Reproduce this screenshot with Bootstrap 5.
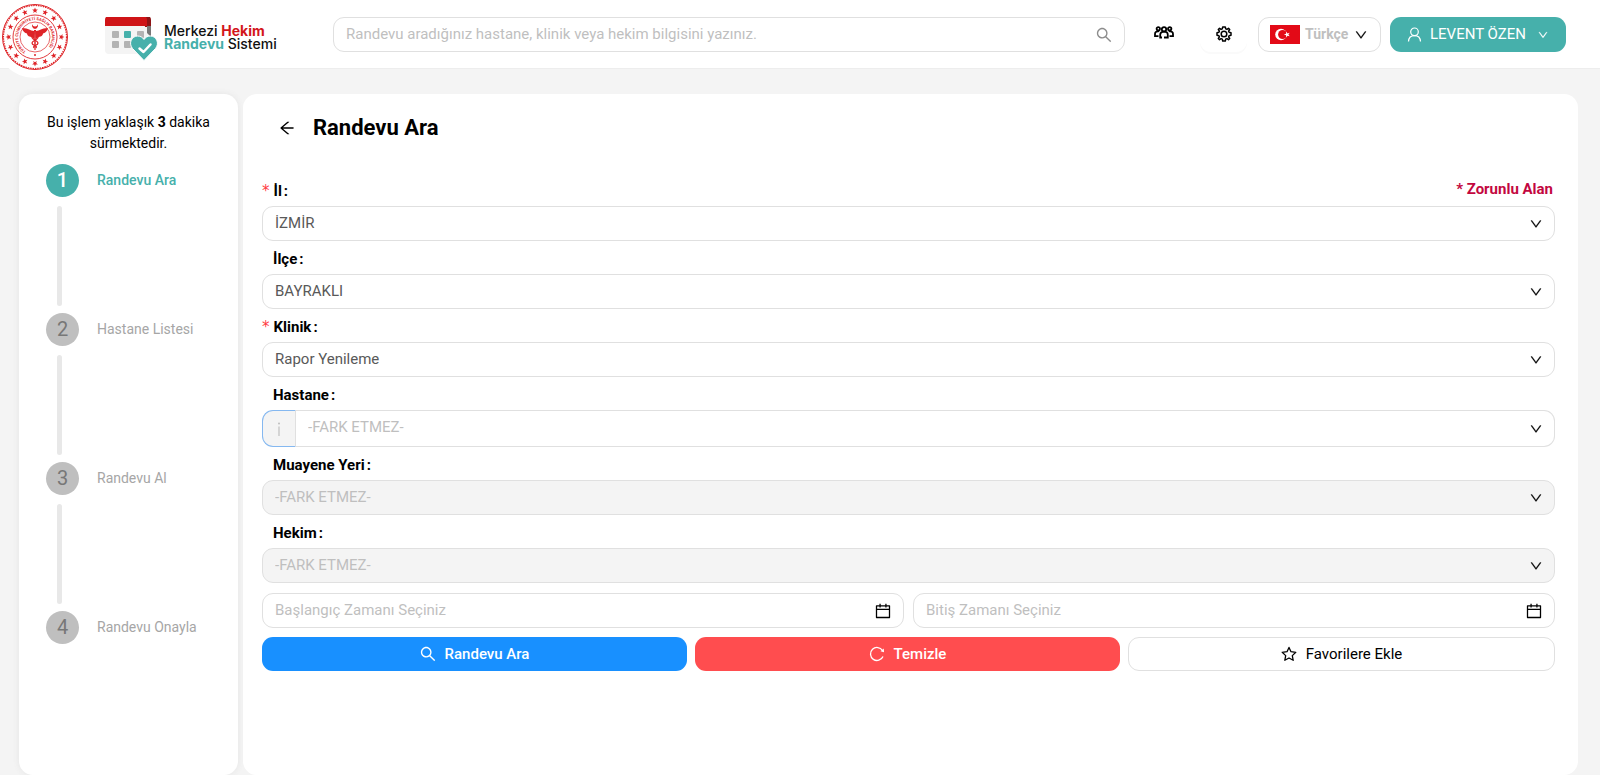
<!DOCTYPE html>
<html lang="tr">
<head>
<meta charset="utf-8">
<meta name="viewport" content="width=device-width, initial-scale=1">
<title>MHRS - Randevu Ara</title>
<link href="https://cdn.jsdelivr.net/npm/bootstrap@5.3.0/dist/css/bootstrap.min.css" rel="stylesheet">
<style>
  :root { --teal: #46b0ab; --line: #e0e0e0; --muted: #bfbfbf; }
  body { font-family: Roboto, "Noto Sans", sans-serif; font-size: 15px; line-height: 21px; color: #000; background: #f4f4f4; }
  svg { display: block; flex: none; }
  .topbar { height: 68px; background: #fff; box-shadow: 0 1px 0 #ededed; padding: 17px 34px 0 105px; }
  .seal { position: absolute; left: -6px; top: -4px; width: 82px; height: 82px; border-radius: 50%; background: #fff; }
  .brand-link { width: 228px; color: #111; text-decoration: none; }
  .brand-name { font-family: Inter, sans-serif; font-size: 14px; line-height: 13px; font-weight: 500; margin: 7px 0 0 5px; white-space: nowrap; }
  .brand-name b { font-weight: 700; }
  .brand-red { color: #d3151b; }
  .brand-teal { color: var(--teal); }
  .field { height: 35px; border: 1px solid var(--line); border-radius: 11px; padding: 0 40px 1px 12px; font-size: 15px; line-height: 21px; color: #595959; background: #fff; }
  .field::placeholder { color: var(--muted); opacity: 1; }
  .field:disabled { background: #f4f4f4; color: var(--muted); opacity: 1; }
  select.field { background-image: none; }
  .field-icon { position: absolute; right: 13px; top: 0; height: 100%; display: flex; align-items: center; pointer-events: none; }
  .field-icon.soft { color: #8c8c8c; }
  .plain { border: 0; background: none; padding: 0; height: 35px; display: flex; align-items: center; justify-content: center; color: #000; }
  .people { width: 29px; margin: 0 22px 0 24px; padding-bottom: 5px; }
  .gear { width: 47px; border-radius: 11px; box-shadow: 0 2px 0 #fafafa; padding-bottom: 2px; margin-right: 11px; }
  .lang { width: 123px; height: 35px; padding: 0 0 0 11px; border: 1px solid var(--line); border-radius: 11px; background: #fff; color: var(--muted); font-weight: 700; font-size: 14px; margin-right: 9px; }
  .lang span { margin: 0 7px 0 5px; }
  .account { width: 176px; height: 35px; padding: 0 0 0 17px; border: 0; border-radius: 11px; background: var(--teal); color: #fff; font-size: 15px; }
  .workspace { padding: 26px 22px 0 19px; gap: 5px; min-height: calc(100vh - 68px); }
  .panel { background: #fff; border-radius: 14px; }
  .steps-panel { width: 219px; padding: 18px 16px; box-shadow: 0 0 6px #e4e4e4; }
  .estimate { font-size: 14px; margin: 0 0 10px; }
  .step { height: 149px; list-style: none; color: #a6a6a6; font-size: 14px; }
  .step:last-child { height: auto; }
  .step-head { height: 33px; gap: 18px; margin-left: 11px; }
  .dot { width: 33px; height: 33px; border-radius: 50%; background: #bfbfbf; color: #777; font-size: 20px; display: flex; align-items: center; justify-content: center; }
  .step.current { color: var(--teal); font-weight: 500; }
  .step.current .dot { background: var(--teal); color: #fff; }
  .rail { width: 5px; height: 100px; border-radius: 3px; background: #e8e8e8; margin: 9px 0 0 22px; }
  .main-panel { padding: 18px 23px 24px 19px; min-width: 0; }
  .page-title { font-size: 22px; line-height: 32px; font-weight: 700; margin: 0; }
  .title-row { gap: 18px; padding-left: 17px; margin-bottom: 29px; }
  .form-label-row { height: 33px; padding: 3px 0 0 11px; font-weight: 700; display: flex; align-items: center; }
  .form-label-row label span { margin-left: 2px; }
  .form-label-row.needed { padding-left: 0; }
  .form-label-row.needed label::before { content: "*"; color: #ff3b3f; font-weight: 400; font-family: "DejaVu Sans", sans-serif; font-size: 15px; margin-right: 4px; }
  .required-note { color: #c3073f; font-weight: 700; margin-left: auto; padding: 0 2px 4px 0; }
  .with-info { height: 37px; display: flex; }
  .with-info .field { height: 37px; border-radius: 0 11px 11px 0; border-left: 0; padding-bottom: 3px; }
  .unset { color: var(--muted); }
  .info { width: 34px; border: 1px solid #85b8f0; border-right-color: var(--line); border-radius: 11px 0 0 11px; background: #f4f4f4; color: var(--muted); padding: 0; }
  .date-row { gap: 9px; margin-top: 10px; }
  .action { flex: 1 1 0; height: 34px; border: 0; border-radius: 11px; font-size: 15px; display: flex; align-items: center; justify-content: center; gap: 9px; padding: 0; }
  .action-row { gap: 8px; margin-top: 9px; }
  .action.go { background: #1890ff; color: #fff; font-weight: 500; }
  .action.clear { background: #ff4d4f; color: #fff; font-weight: 500; }
  .action.fav { background: #fff; color: #000; border: 1px solid var(--line); }
</style>
</head>
<body>
<svg width="0" height="0" class="position-absolute" aria-hidden="true">
  <defs>
    <symbol id="down" viewBox="64 64 896 896"><path fill="currentColor" stroke="currentColor" stroke-width="20" d="M884 256h-75c-5.100 0-9.900 2.500-12.900 6.600L512 654.200 227.900 262.600c-3-4.100-7.800-6.600-12.900-6.600h-75c-6.500 0-10.300 7.400-6.500 12.700l352.600 486.100c12.800 17.600 39 17.600 51.700 0l352.600-486.100c3.900-5.300.1-12.700-6.400-12.700z"/></symbol>
    <symbol id="search" viewBox="64 64 896 896"><path fill="currentColor" d="M909.600 854.500L649.900 594.800C690.200 542.700 712 479 712 412c0-80.200-31.300-155.400-87.900-212.100-56.600-56.700-132-87.900-212.100-87.900s-155.500 31.300-212.100 87.900C143.200 256.500 112 331.800 112 412c0 80.100 31.300 155.500 87.900 212.100C256.500 680.800 331.800 712 412 712c67 0 130.600-21.800 182.700-62l259.700 259.600a8.200 8.200 0 0 0 11.600 0l43.600-43.500a8.200 8.200 0 0 0 0-11.600zM570.400 570.400C528 612.700 471.800 636 412 636s-116-23.300-158.400-65.600C211.300 528 188 471.800 188 412s23.300-116.100 65.600-158.400C296 211.300 352.200 188 412 188s116.100 23.200 158.400 65.600S636 352.200 636 412s-23.300 116.100-65.600 158.400z"/></symbol>
    <symbol id="calendar" viewBox="64 64 896 896"><path fill="currentColor" d="M880 184H712v-64c0-4.400-3.600-8-8-8h-56c-4.400 0-8 3.600-8 8v64H384v-64c0-4.400-3.600-8-8-8h-56c-4.400 0-8 3.600-8 8v64H144c-17.700 0-32 14.300-32 32v664c0 17.700 14.300 32 32 32h736c17.700 0 32-14.300 32-32V216c0-17.700-14.300-32-32-32zm-40 656H184V460h656v380zM184 392V256h128v48c0 4.400 3.600 8 8 8h56c4.400 0 8-3.600 8-8v-48h256v48c0 4.400 3.600 8 8 8h56c4.400 0 8-3.600 8-8v-48h128v136H184z"/></symbol>
    <path id="star" fill="#de2428" d="M0-3 .8-1 2.900-.9 1.200.4 1.800 2.500 0 1.300-1.800 2.500-1.200.4-2.900-.9-.8-1z"/>
  </defs>
</svg>

<header class="topbar position-relative d-flex align-items-start">
  <a class="seal" href="#" aria-label="Sağlık Bakanlığı">
    <svg width="82" height="82" viewBox="-41 -41 82 82">
      <g fill="none" stroke="#de2428">
        <circle r="32.500" stroke-width="1"/><circle r="31.500" stroke-width="1.200" stroke-dasharray="1.500 .9"/>
        <circle r="22" stroke-width=".9"/><circle r="15" stroke-width=".7"/>
      </g>
      <g>
        <use href="#star" y="-26.500"/><use href="#star" y="-26.500" transform="rotate(22.500)"/><use href="#star" y="-26.500" transform="rotate(45)"/><use href="#star" y="-26.500" transform="rotate(67.500)"/>
        <use href="#star" y="-26.500" transform="rotate(90)"/><use href="#star" y="-26.500" transform="rotate(112.500)"/><use href="#star" y="-26.500" transform="rotate(135)"/><use href="#star" y="-26.500" transform="rotate(157.500)"/>
        <use href="#star" y="-26.500" transform="rotate(180)"/><use href="#star" y="-26.500" transform="rotate(202.500)"/><use href="#star" y="-26.500" transform="rotate(225)"/><use href="#star" y="-26.500" transform="rotate(247.500)"/>
        <use href="#star" y="-26.500" transform="rotate(270)"/><use href="#star" y="-26.500" transform="rotate(292.500)"/><use href="#star" y="-26.500" transform="rotate(315)"/><use href="#star" y="-26.500" transform="rotate(337.500)"/>
      </g>
      <path id="arc" fill="none" d="M-9 14.300A16.900 16.900 0 1 1 9 14.300"/>
      <text font-size="4" font-weight="700" fill="#de2428" font-family="Roboto, sans-serif"><textPath href="#arc">TÜRKİYE CUMHURİYETİ SAĞLIK BAKANLIĞI</textPath></text>
      <g fill="#de2428">
        <path d="M-1-6C-5-6-6-9-13-9-12-5-10-4-8-3.500-8-1-5 0-3 0L-1 2zM1-6C5-6 6-9 13-9 12-5 10-4 8-3.500 8-1 5 0 3 0L1 2z"/>
        <path d="M-1-7h2l-.4 20h-1.200z"/>
        <path fill="none" stroke="#de2428" stroke-width="1.300" d="M-3-2C-5 3 3 3 3 6S-3 8-1 11M3-2C5 3-3 3-3 6S3 8 1 11"/>
        <path d="M-2.500-13A3 3 0 1 0 2.500-13 2.200 2.200 0 1 1-2.500-13z"/><circle cy="18" r="1"/>
      </g>
    </svg>
  </a>

  <a class="brand-link d-flex align-items-start flex-shrink-0" href="#">
    <svg width="54" height="44" viewBox="0 0 54 44">
      <path fill="#f4f4f4" d="M0 6h45v27a4 4 0 0 1-4 4H4a4 4 0 0 1-4-4z"/>
      <path fill="#8e1416" d="M39-1h3a4 4 0 0 1 4 4v7h-6z"/><path fill="#777" d="M42 9h4v11l-4-4z"/>
      <path fill="#cf1417" d="M4-1h34a4 4 0 0 1 4 4v6H0V3a4 4 0 0 1 4-4z"/>
      <g fill="#b3b3b3"><rect x="7" y="14" width="7" height="7" rx="1"/><rect x="32" y="14" width="7" height="7" rx="1"/><rect x="7" y="24" width="7" height="7" rx="1"/><rect x="19" y="24" width="7" height="7" rx="1"/></g>
      <rect x="19" y="14" width="7" height="7" rx="1" fill="#46b0ab"/>
      <path fill="#46b0ab" stroke="#fff" stroke-width="1" d="M39 43.500 27.500 31.500C23 26 27 19 32.500 19c3 0 5 1.300 6.500 3.500C40.500 20.300 42.500 19 45.500 19 51 19 55 26 50.500 31.500z"/>
      <path fill="none" stroke="#fff" stroke-width="2.500" stroke-linecap="round" stroke-linejoin="round" d="m34.500 31.500 4 3.500 7-7.500"/>
    </svg>
    <span class="brand-name">Merkezi <b class="brand-red">Hekim</b><br><b class="brand-teal">Randevu</b> Sistemi</span>
  </a>

  <form class="position-relative flex-grow-1" role="search">
    <input class="field form-control shadow-none" type="search" aria-label="Randevu arama" placeholder="Randevu aradığınız hastane, klinik veya hekim bilgisini yazınız.">
    <span class="field-icon soft"><svg width="16" height="16"><use href="#search"/></svg></span>
  </form>

  <button class="plain people" type="button" aria-label="Kişiler">
    <svg width="20" height="13" viewBox="0 0 20 13" fill="none" stroke="#000" stroke-width="1.800">
      <circle cx="10" cy="3.300" r="2.200"/><circle cx="4.300" cy="2.800" r="1.700"/><circle cx="15.700" cy="2.800" r="1.700"/>
      <path d="M8 11.500H6.200V9c0-2.300 1.300-3.300 3.800-3.300s3.800 1 3.800 3.300v2.500H10M5.200 5.200C2.300 5.200 1 6.200 1 8v2.200h3.500M14.800 5.200c2.900 0 4.200 1 4.200 2.800v2.200h-3.500"/>
    </svg>
  </button>
  <button class="plain gear" type="button" aria-label="Ayarlar">
    <svg width="16" height="16" viewBox="-8 -8 16 16" fill="none" stroke="#000" stroke-width="1.500" stroke-linejoin="round">
      <path d="M-1.300-7H1.300L1.700-5.100 2.900-4.600 4.500-5.700 5.700-4.500 4.600-2.900 5.100-1.700 7-1.300V1.300L5.100 1.700 4.600 2.900 5.700 4.500 4.500 5.700 2.900 4.600 1.700 5.100 1.300 7H-1.300L-1.700 5.100-2.900 4.600-4.500 5.700-5.700 4.500-4.600 2.900-5.100 1.700-7 1.300V-1.300L-5.100-1.700-4.600-2.900-5.700-4.500-4.500-5.700-2.900-4.600-1.700-5.100z"/><circle r="2.800"/>
    </svg>
  </button>
  <button class="lang d-flex align-items-center flex-shrink-0" type="button">
    <svg width="30" height="19" viewBox="0 0 30 19"><path fill="#e30a17" d="M0 0h30v19H0z"/><circle cx="11" cy="9.500" r="5.800" fill="#fff"/><circle cx="12.600" cy="9.500" r="4.500" fill="#e30a17"/><path fill="#fff" d="m13.900 9.500 2.200-.7.100-2.200 1.300 1.800 2.200-.6-1.300 1.700 1.300 1.800-2.200-.6-1.300 1.800-.1-2.300z"/></svg>
    <span>Türkçe</span>
    <svg width="12" height="12" class="text-black"><use href="#down"/></svg>
  </button>
  <button class="account d-flex align-items-center flex-shrink-0" type="button">
    <svg width="15" height="15" viewBox="0 0 15 15" fill="none" stroke="#fff" stroke-width="1.200"><circle cx="7.500" cy="4.800" r="3.800"/><path d="M1.500 14.500c.2-3.700 2.800-5.900 6-5.900s5.800 2.200 6 5.900"/></svg>
    <span class="mx-2 pe-1">LEVENT ÖZEN</span>
    <svg width="10" height="10"><use href="#down"/></svg>
  </button>
</header>

<div class="workspace d-flex">
  <aside class="panel steps-panel flex-shrink-0">
    <p class="estimate text-center">Bu işlem yaklaşık <b>3</b> dakika sürmektedir.</p>
    <ol class="p-0 m-0">
      <li class="step current" aria-current="step"><div class="step-head d-flex align-items-center"><span class="dot">1</span>Randevu Ara</div><div class="rail"></div></li>
      <li class="step"><div class="step-head d-flex align-items-center"><span class="dot">2</span>Hastane Listesi</div><div class="rail"></div></li>
      <li class="step"><div class="step-head d-flex align-items-center"><span class="dot">3</span>Randevu Al</div><div class="rail"></div></li>
      <li class="step"><div class="step-head d-flex align-items-center"><span class="dot">4</span>Randevu Onayla</div></li>
    </ol>
  </aside>

  <main class="panel main-panel flex-grow-1">
    <div class="title-row d-flex align-items-center">
      <a href="#" class="text-black" aria-label="Geri"><svg width="16" height="16" viewBox="64 64 896 896"><path fill="currentColor" d="M872 474H286.900l350.200-304c5.600-4.900 2.200-14-5.200-14h-88.500c-3.900 0-7.600 1.400-10.500 3.900L155 487.800a31.960 31.960 0 0 0 0 48.300L535.100 866c1.500 1.300 3.300 2 5.200 2h91.500c7.400 0 10.800-9.200 5.200-14L286.900 550H872c4.400 0 8-3.600 8-8v-60c0-4.400-3.600-8-8-8z"/></svg></a>
      <h1 class="page-title">Randevu Ara</h1>
    </div>

    <form>
      <div class="form-label-row needed"><label for="il">İl<span>:</span></label><span class="required-note">* Zorunlu Alan</span></div>
      <div class="position-relative">
        <select id="il" class="field form-select shadow-none"><option>İZMİR</option></select>
        <span class="field-icon"><svg width="12" height="12"><use href="#down"/></svg></span>
      </div>

      <div class="form-label-row"><label for="ilce">İlçe<span>:</span></label></div>
      <div class="position-relative">
        <select id="ilce" class="field form-select shadow-none"><option>BAYRAKLI</option></select>
        <span class="field-icon"><svg width="12" height="12"><use href="#down"/></svg></span>
      </div>

      <div class="form-label-row needed"><label for="klinik">Klinik<span>:</span></label></div>
      <div class="position-relative">
        <select id="klinik" class="field form-select shadow-none"><option>Rapor Yenileme</option></select>
        <span class="field-icon"><svg width="12" height="12"><use href="#down"/></svg></span>
      </div>

      <div class="form-label-row"><label for="hastane">Hastane<span>:</span></label></div>
      <div class="position-relative with-info">
        <button class="info d-flex align-items-center justify-content-center flex-shrink-0" type="button" aria-label="Bilgi"><svg width="4" height="14" viewBox="0 0 4 14" fill="currentColor"><circle cx="2" cy="1.500" r="1"/><path d="M1.400 4.500h1.200V14H1.400z"/></svg></button>
        <select id="hastane" class="field unset form-select shadow-none"><option>-FARK ETMEZ-</option></select>
        <span class="field-icon"><svg width="12" height="12"><use href="#down"/></svg></span>
      </div>

      <div class="form-label-row"><label for="yer">Muayene Yeri<span>:</span></label></div>
      <div class="position-relative">
        <select id="yer" class="field form-select shadow-none" disabled><option>-FARK ETMEZ-</option></select>
        <span class="field-icon"><svg width="12" height="12"><use href="#down"/></svg></span>
      </div>

      <div class="form-label-row"><label for="hekim">Hekim<span>:</span></label></div>
      <div class="position-relative">
        <select id="hekim" class="field form-select shadow-none" disabled><option>-FARK ETMEZ-</option></select>
        <span class="field-icon"><svg width="12" height="12"><use href="#down"/></svg></span>
      </div>

      <div class="d-flex date-row">
        <div class="position-relative flex-fill"><input class="field form-control shadow-none" type="text" aria-label="Başlangıç Zamanı" placeholder="Başlangıç Zamanı Seçiniz"><span class="field-icon"><svg width="16" height="16"><use href="#calendar"/></svg></span></div>
        <div class="position-relative flex-fill"><input class="field form-control shadow-none" type="text" aria-label="Bitiş Zamanı" placeholder="Bitiş Zamanı Seçiniz"><span class="field-icon"><svg width="16" height="16"><use href="#calendar"/></svg></span></div>
      </div>

      <div class="d-flex action-row">
        <button class="action go" type="submit"><svg width="16" height="16"><use href="#search"/></svg>Randevu Ara</button>
        <button class="action clear" type="reset"><svg width="16" height="16" viewBox="0 0 16 16" fill="none" stroke="#fff" stroke-width="1.300"><path d="M14 10.500A6.500 6.500 0 1 1 13.500 4.500"/><path fill="#fff" stroke="none" d="m14.800 2.500.2 3.800-3.500-1z"/></svg>Temizle</button>
        <button class="action fav" type="button"><svg width="16" height="16" viewBox="0 0 16 16" fill="none" stroke="#000" stroke-width="1.300" stroke-linejoin="round"><path d="m8 1.400 2 4.300 4.800.6-3.500 3.300.9 4.700L8 12l-4.200 2.300.9-4.700L1.200 6.300 6 5.700z"/></svg>Favorilere Ekle</button>
      </div>
    </form>
  </main>
</div>
<script src="https://cdn.jsdelivr.net/npm/bootstrap@5.3.0/dist/js/bootstrap.bundle.min.js"></script>
</body>
</html>
